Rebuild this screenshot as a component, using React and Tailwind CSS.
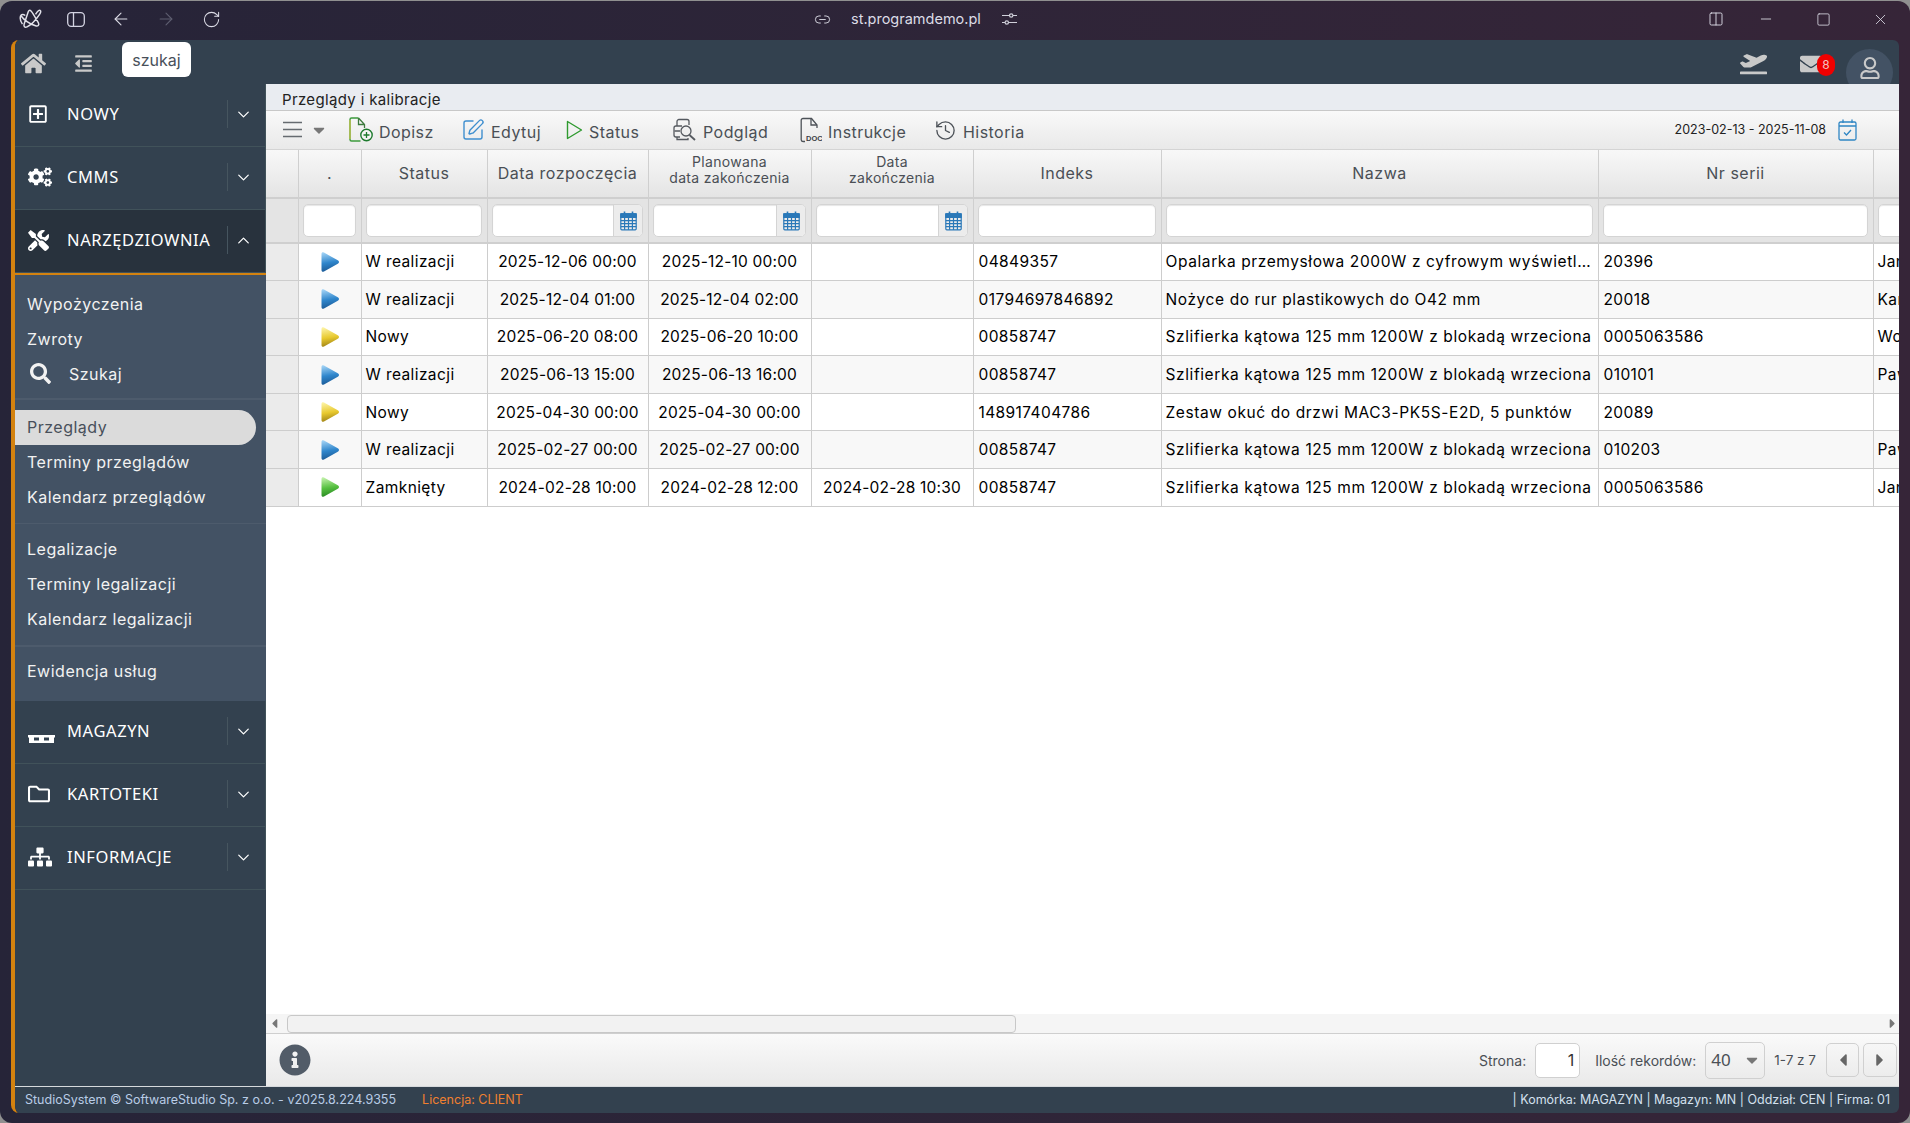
import React from 'react';
import { ArrowLeft, ArrowRight, RotateCw, Link2, Columns2, Minus, Square, X, ChevronDown, ChevronUp, SquarePen, History } from 'lucide-react';
import { FaHome, FaOutdent, FaRegPlusSquare, FaCogs, FaTools, FaRegFolder, FaSitemap, FaPlaneDeparture, FaEnvelope, FaInfoCircle, FaSearch, FaCaretDown, FaCaretLeft, FaCaretRight, FaRegUser } from 'react-icons/fa';

const columns = [32, 63, 126, 161, 163, 162, 188, 437, 275, 180];

const rows = [
    { color: 'blue', status: 'W realizacji', start: '2025-12-06 00:00', plan: '2025-12-10 00:00', end: '', index: '04849357', name: 'Opalarka przemysłowa 2000W z cyfrowym wyświetl…', serial: '20396', person: 'Jan' },
    { color: 'blue', status: 'W realizacji', start: '2025-12-04 01:00', plan: '2025-12-04 02:00', end: '', index: '01794697846892', name: 'Nożyce do rur plastikowych do O42 mm', serial: '20018', person: 'Kamil' },
    { color: 'yellow', status: 'Nowy', start: '2025-06-20 08:00', plan: '2025-06-20 10:00', end: '', index: '00858747', name: 'Szlifierka kątowa 125 mm 1200W z blokadą wrzeciona', serial: '0005063586', person: 'Wojciech' },
    { color: 'blue', status: 'W realizacji', start: '2025-06-13 15:00', plan: '2025-06-13 16:00', end: '', index: '00858747', name: 'Szlifierka kątowa 125 mm 1200W z blokadą wrzeciona', serial: '010101', person: 'Paweł' },
    { color: 'yellow', status: 'Nowy', start: '2025-04-30 00:00', plan: '2025-04-30 00:00', end: '', index: '148917404786', name: 'Zestaw okuć do drzwi MAC3-PK5S-E2D, 5 punktów', serial: '20089', person: '' },
    { color: 'blue', status: 'W realizacji', start: '2025-02-27 00:00', plan: '2025-02-27 00:00', end: '', index: '00858747', name: 'Szlifierka kątowa 125 mm 1200W z blokadą wrzeciona', serial: '010203', person: 'Paweł' },
    { color: 'green', status: 'Zamknięty', start: '2024-02-28 10:00', plan: '2024-02-28 12:00', end: '2024-02-28 10:30', index: '00858747', name: 'Szlifierka kątowa 125 mm 1200W z blokadą wrzeciona', serial: '0005063586', person: 'Jan' },
];

const triangleColors = {
    blue: ['#a4d4f6', '#2f86cc', '#1c5a96'],
    yellow: ['#fdf4a8', '#e8c92e', '#a08418'],
    green: ['#c4f2ac', '#56c040', '#2a8a24'],
};

const StatusTriangle = ({ color }) => {
    const [light, mid, dark] = triangleColors[color];
    const id = `tri-${color}`;
    return (
        <svg width="18" height="20" viewBox="0 0 18 20" className="mx-auto">
            <defs>
                <linearGradient id={id} x1="0.2" y1="0" x2="0.35" y2="1">
                    <stop offset="0" stopColor={light} />
                    <stop offset="0.55" stopColor={mid} />
                    <stop offset="1" stopColor={dark} />
                </linearGradient>
            </defs>
            <path d="M0.5 2C0.500 .4 1.600 -.2 3 .6L16.800 8.300c1.600 .9 1.600 2.500 0 3.400L3 19.400c-1.400 .8-2.500 .2-2.500-1.400z" fill={`url(#${id})`} />
        </svg>
    );
};

const CalendarIcon = () => (
    <svg width="17" height="20" viewBox="0 0 17 20" fill="none" stroke="#2a78b8" strokeWidth="1.2">
        <path d="M4.5 0.5v4M12.5 0.5v4" strokeWidth="1.6" />
        <rect x="0.8" y="2.8" width="15.4" height="16" rx="1" />
        <rect x="0.8" y="2.8" width="15.4" height="3.6" fill="#2a78b8" />
        <path d="M0.8 9.6h15.4M0.8 12.6h15.4M0.8 15.6h15.4M4.6 6.4v12.4M8.5 6.4v12.4M12.4 6.4v12.4" />
    </svg>
);

const LogoIcon = () => (
    <svg width="24" height="23" viewBox="0 0 21 20" fill="none" stroke="#e2e2ea" strokeWidth="1.3" strokeLinejoin="round">
        <path d="M1.5 6.5c3 4 8 7.500 13 9 2 .6 3.500-.5 2.500-2.500C14.500 8.500 12 4 10.500 2.500 9.500 1.500 8.500 2 8 3.500L4.500 14c-.6 2 .6 3.500 2.500 2.500 4-2 8-6.500 11-11 1-1.500 1.500-3 .5-3.500-1.500-.5-3 2-4 3.500" />
        <path d="M1.500 6.500C.8 8.500 1.500 12 3 14M1.500 6.500c1-1 2.500-1 4 0" />
    </svg>
);

const SlidersIcon = () => (
    <svg width="15" height="14" viewBox="0 0 15 14" fill="none" stroke="#d0d0da" strokeWidth="1.2">
        <path d="M0 3.500h7.500M11 3.500h4M0 10.500h3M6.500 10.500h8.500" />
        <circle cx="9.200" cy="3.500" r="1.700" />
        <circle cx="4.800" cy="10.500" r="1.700" />
    </svg>
);

const PalletIcon = () => (
    <svg width="27" height="28" viewBox="0 0 27 28" fill="#fff" className="translate-y-[8px]">
        <rect x="0" y="10" width="27" height="2.500" />
        <rect x="1" y="15.500" width="25" height="2.500" />
        <rect x="1" y="12" width="5" height="4" />
        <rect x="11" y="12" width="5" height="4" />
        <rect x="21" y="12" width="5" height="4" />
    </svg>
);

const DopiszIcon = () => (
    <svg width="24" height="26" viewBox="0 0 24 26" fill="none">
        <path d="M9.500 1H2.500A1.500 1.500 0 0 0 1 2.500v20A1.500 1.500 0 0 0 2.500 24h9" stroke="#3d9a3d" strokeWidth="1.400" />
        <path d="M1 3v19" stroke="#d8c23a" strokeWidth="1" />
        <path d="M9.500 1l6 6.500v3.500M9.500 1v6.500h6" stroke="#3d7a3d" strokeWidth="1.300" />
        <circle cx="17.500" cy="18" r="5.700" fill="#fff" fillOpacity="0.4" stroke="#1d7a2d" strokeWidth="1.400" />
        <path d="M17.500 15v6M14.500 18h6" stroke="#1d7a2d" strokeWidth="1.300" />
    </svg>
);

const StatusIcon = () => (
    <svg width="17" height="20" viewBox="0 0 17 20" fill="none" stroke="#2f9a2f" strokeWidth="1.400" strokeLinejoin="round">
        <path d="M1.500 1.500l14 8.500-14 8.500z" />
    </svg>
);

const PodgladIcon = () => (
    <svg width="24" height="24" viewBox="0 0 24 24" fill="none" stroke="#55595f" strokeWidth="1.300">
        <path d="M4 8V3.500A2 2 0 0 1 6 1.500h8a2 2 0 0 1 2 2V7" />
        <path d="M9 8H3a2 2 0 0 0-2 2v7a2 2 0 0 0 2 2h4" />
        <path d="M1.500 13H7M4 19v2.500h11V20" />
        <circle cx="13" cy="13" r="5" />
        <path d="M16.500 17l5.500 5" strokeWidth="1.800" />
    </svg>
);

const InstrukcjeIcon = () => (
    <svg width="22" height="26" viewBox="0 0 22 26" fill="none" stroke="#4d5258" strokeWidth="1.300">
        <path d="M6 1.500H3A1.800 1.800 0 0 0 1.200 3.300v19.400A1.800 1.800 0 0 0 3 24.500h2" />
        <path d="M6 1.500h5.500l5.500 6.500v3" />
        <path d="M11 1.500V8h6" />
        <text x="6" y="24" fontSize="7.500" fontWeight="800" fill="#3d4248" stroke="none" fontFamily="Liberation Sans, sans-serif">DOC</text>
    </svg>
);

const ToolbarButton = ({ icon, label, className }) => (
    <button className={`flex shrink-0 items-center gap-[6px] text-[#4a4f55] ${className}`}>
        {icon}
        <span className="relative top-[2px] text-[16px] tracking-[0.45px]">{label}</span>
    </button>
);

const MenuHeader = ({ icon, label, open }) => (
    <div className={`flex h-[63px] items-start border-b border-r border-[#41525a] pt-[16px] ${open ? 'bg-[#28323d]' : ''}`}>
        <div className="flex h-[28px] w-[52px] items-center pl-[13px] text-white">{icon}</div>
        <span className="w-[160px] whitespace-nowrap pt-[3px] font-['Noto_Sans',sans-serif] text-[16.5px] leading-[22px] tracking-[0.6px] text-white">{label}</span>
        <div className="flex h-[28px] flex-1 items-center justify-center border-l border-[#46555f] pr-[6px] text-white">
            {open ? <ChevronUp size={19} strokeWidth={1.6} /> : <ChevronDown size={19} strokeWidth={1.6} />}
        </div>
    </div>
);

const SubItem = ({ children, active }) => (
    <div
        className={`flex h-[35px] items-center pb-[2px] pl-[12px] text-[16px] tracking-[0.5px] ${
            active ? 'mr-[10px] rounded-r-[18px] bg-[#dbdbdb] text-[#48505a]' : 'text-[#f2f2f2]'
        }`}
    >
        {children}
    </div>
);

const Sidebar = () => (
    <aside className="flex w-[251px] shrink-0 flex-col bg-[#33414f]">
        <MenuHeader icon={<FaRegPlusSquare size={20} />} label="NOWY" />
        <MenuHeader icon={<FaCogs size={24} />} label="CMMS" />
        <MenuHeader icon={<FaTools size={21} />} label="NARZĘDZIOWNIA" open />
        <div className="h-[428px] border-t-2 border-[#d4820f] bg-[#435264]">
            <div className="border-b-2 border-[#4d5b6c] pb-[6px] pt-[12px]">
                <SubItem>Wypożyczenia</SubItem>
                <SubItem>Zwroty</SubItem>
                <SubItem>
                    <FaSearch size={21} className="ml-[3px] mr-[18px]" />
                    Szukaj
                </SubItem>
            </div>
            <div className="border-b border-[#4d5b6c] pb-[8px] pt-[10px]">
                <SubItem active>Przeglądy</SubItem>
                <SubItem>Terminy przeglądów</SubItem>
                <SubItem>Kalendarz przeglądów</SubItem>
            </div>
            <div className="border-b-2 border-[#4d5b6c] pb-[8px] pt-[8px]">
                <SubItem>Legalizacje</SubItem>
                <SubItem>Terminy legalizacji</SubItem>
                <SubItem>Kalendarz legalizacji</SubItem>
            </div>
            <div className="pt-[7px]">
                <SubItem>Ewidencja usług</SubItem>
            </div>
        </div>
        <MenuHeader icon={<PalletIcon />} label="MAGAZYN" />
        <MenuHeader icon={<FaRegFolder size={22} />} label="KARTOTEKI" />
        <MenuHeader icon={<FaSitemap size={24} />} label="INFORMACJE" />
    </aside>
);

const FilterInput = ({ calendar }) => (
    <div className="flex h-[33px] w-full overflow-hidden rounded-[5px] border border-[#d4d4d4] bg-white shadow-[inset_0_1px_1px_#e6e6e6]">
        <div className="flex-1" />
        {calendar && (
            <div className="flex w-[29px] items-center justify-center border-l border-[#d4d4d4] bg-[#ececec] pl-[2px]">
                <CalendarIcon />
            </div>
        )}
    </div>
);

const DataTable = () => {
    const tableWidth = columns.reduce((sum, w) => sum + w, 0);
    const headers = [
        '',
        '.',
        'Status',
        'Data rozpoczęcia',
        <span className="relative -top-[3px] block text-[14px] leading-[16px] tracking-[0.3px]">Planowana<br />data zakończenia</span>,
        <span className="relative -top-[3px] block text-[14px] leading-[16px] tracking-[0.3px]">Data<br />zakończenia</span>,
        'Indeks',
        'Nazwa',
        'Nr serii',
        '',
    ];
    const filters = [null, false, false, true, true, true, false, false, false, false];

    return (
        <div className="min-h-0 flex-1 overflow-hidden bg-white">
            <table className="table-fixed border-collapse" style={{ width: tableWidth }}>
                <colgroup>
                    {columns.map((w, i) => (
                        <col key={i} style={{ width: w }} />
                    ))}
                </colgroup>
                <thead>
                    <tr className="h-[48px] bg-gradient-to-b from-[#f8f8f8] to-[#e4e4e4]">
                        {headers.map((h, i) => (
                            <th key={i} className="border-x border-b-2 border-x-[#cfcfcf] border-b-[#cfcfcf] pb-[2px] text-center text-[16px] font-normal tracking-[0.5px] text-[#4a4f55] first:border-l-0">
                                {h}
                            </th>
                        ))}
                    </tr>
                    <tr className="h-[45px] bg-[#e4e4e4]">
                        {filters.map((f, i) => (
                            <th key={i} className="border-x border-b-2 border-x-[#cfcfcf] border-b-[#cfcfcf] pl-[4px] pr-[5px] first:border-l-0">
                                {f !== null && <FilterInput calendar={f} />}
                            </th>
                        ))}
                    </tr>
                </thead>
                <tbody>
                    {rows.map((row, i) => (
                        <tr key={i} className={`h-[37.6px] text-[15.5px] tracking-[0.4px] text-black ${i % 2 ? 'bg-[#f8f8f8]' : 'bg-white'}`}>
                            <td className="border border-l-0 border-[#cdcdcd] bg-[#ebebeb]" />
                            <td className="border border-[#cdcdcd]">
                                <StatusTriangle color={row.color} />
                            </td>
                            <td className="border border-[#cdcdcd] pl-[4px]">{row.status}</td>
                            <td className="border border-[#cdcdcd] text-center tracking-[0.2px]">{row.start}</td>
                            <td className="border border-[#cdcdcd] text-center tracking-[0.2px]">{row.plan}</td>
                            <td className="border border-[#cdcdcd] text-center tracking-[0.2px]">{row.end}</td>
                            <td className="border border-[#cdcdcd] px-[5px]">{row.index}</td>
                            <td className="whitespace-nowrap border border-[#cdcdcd] px-[4px] tracking-[0.6px]">{row.name}</td>
                            <td className="border border-[#cdcdcd] px-[5px]">{row.serial}</td>
                            <td className="border border-[#cdcdcd] px-[4px]">{row.person}</td>
                        </tr>
                    ))}
                </tbody>
            </table>
        </div>
    );
};

const Pager = () => (
    <div className="flex h-[53px] shrink-0 items-center border-t border-[#cfcfcf] bg-gradient-to-b from-[#fafafa] to-[#e9e9e9] pl-[13px] pr-[2px] text-[14px] text-[#4a4f55]">
        <FaInfoCircle size={32} className="text-[#525c68]" />
        <span className="ml-auto">Strona:</span>
        <div className="ml-[9px] flex h-[35px] w-[45px] items-center justify-end rounded-[5px] border border-[#d0d0d0] bg-white pr-[5px] text-[16px] text-[#333]">1</div>
        <span className="ml-[15px]">Ilość rekordów:</span>
        <div className="ml-[9px] flex h-[37px] w-[60px] items-center justify-between rounded-[5px] border border-[#d0d0d0] pl-[5px] pr-[3px] font-['Noto_Sans',sans-serif] text-[17px]">
            40
            <FaCaretDown size={18} className="text-[#777]" />
        </div>
        <span className="ml-[9px] mr-[10px] text-[13.5px]">1-7 z 7</span>
        <div className="mr-[4px] flex h-[34px] w-[33px] items-center justify-center rounded-[5px] border border-[#d0d0d0] text-[#666]">
            <FaCaretLeft size={20} />
        </div>
        <div className="flex h-[34px] w-[34px] items-center justify-center rounded-[5px] border border-[#d0d0d0] text-[#666]">
            <FaCaretRight size={20} />
        </div>
    </div>
);

const Content = () => (
    <main className="flex min-w-0 flex-1 flex-col bg-white">
        <div className="flex h-[27px] shrink-0 items-center border-b border-[#c8c8c8] bg-[#e9ecf1] pl-[16px] pt-[6px] text-[15px] tracking-[0.35px] text-[#222]">
            Przeglądy i kalibracje
        </div>
        <div className="flex h-[39px] shrink-0 items-center border-b border-[#d4d4d4] bg-gradient-to-b from-[#f9f9f9] to-[#e9e9e9] pl-[17px] pr-[42px]">
            <svg width="19" height="17" viewBox="0 0 19 17" stroke="#666b70" strokeWidth="1.700" className="relative top-[-1px] shrink-0">
                <path d="M0 1.500h19M0 8.500h19M0 15.500h19" />
            </svg>
            <FaCaretDown size={18} className="ml-[8px] mr-[21px] shrink-0 text-[#777]" />
            <ToolbarButton icon={<DopiszIcon />} label="Dopisz" className="w-[112px]" />
            <ToolbarButton icon={<SquarePen size={24} strokeWidth={1.4} className="text-[#3f8fcf]" />} label="Edytuj" className="w-[105px] gap-[3px]" />
            <ToolbarButton icon={<StatusIcon />} label="Status" className="w-[107px]" />
            <ToolbarButton icon={<PodgladIcon />} label="Podgląd" className="w-[127px]" />
            <ToolbarButton icon={<InstrukcjeIcon />} label="Instrukcje" className="w-[134px]" />
            <ToolbarButton icon={<History size={23} strokeWidth={1.4} className="text-[#4d5258]" />} label="Historia" className="gap-[4px]" />
            <span className="ml-auto text-[12.5px] text-[#222]">2023-02-13 - 2025-11-08</span>
            <svg width="19" height="22" viewBox="0 0 19 22" fill="none" stroke="#2f86c4" strokeWidth="1.300" className="ml-[12px]">
                <rect x="1" y="3" width="17" height="18" rx="1.500" />
                <path d="M1 7h17M5 0.500V4M14 0.500V4M6 13.500l2.500 2.500 4.500-5" />
            </svg>
        </div>
        <DataTable />
        <div className="flex h-[19px] shrink-0 items-center bg-[#f5f5f5]">
            <FaCaretLeft size={15} className="ml-[1px] text-[#777]" />
            <div className="ml-[5px] h-[18px] w-[729px] rounded-[4px] border border-[#c8c8c8] bg-[#f2f2f2]" />
            <FaCaretRight size={15} className="ml-auto mr-[-1px] text-[#777]" />
        </div>
        <Pager />
    </main>
);

const TitleBar = () => (
    <div className="relative flex h-[39px] shrink-0 items-center pb-[3px] text-[#dcdce6]">
        <div className="ml-[19px]"><LogoIcon /></div>
        <svg width="18" height="15" viewBox="0 0 18 15" fill="none" stroke="#d4d4e2" strokeWidth="1.300" className="ml-[24px]">
            <rect x="0.700" y="0.700" width="16.600" height="13.600" rx="3.500" />
            <path d="M6.500 0.700v13.600" />
        </svg>
        <ArrowLeft size={20} strokeWidth={1.3} className="ml-[26px]" />
        <ArrowRight size={20} strokeWidth={1.3} className="ml-[25px] text-[#5e5e70]" />
        <RotateCw size={19} strokeWidth={1.3} className="ml-[26px]" />
        <div className="ml-[593px] flex items-center">
            <Link2 size={17} strokeWidth={1.3} />
            <span className="ml-[20px] text-[14.5px]">st.programdemo.pl</span>
            <span className="ml-[21px]"><SlidersIcon /></span>
        </div>
        <div className="ml-auto mr-[21px] flex items-center">
            <Columns2 size={16} strokeWidth={1.4} />
            <Minus size={16} strokeWidth={1.3} className="ml-[34px]" />
            <Square size={15} strokeWidth={1.3} className="ml-[42px]" />
            <X size={17} strokeWidth={1.2} className="ml-[41px]" />
        </div>
    </div>
);

const Header = () => (
    <div className="flex h-[44px] shrink-0 items-center overflow-hidden bg-[#33414f] pt-[3px] text-[#c9c9c9]">
        <FaHome size={25} className="ml-[6px]" />
        <FaOutdent size={19} className="ml-[28px]" />
        <button className="ml-[29px] mb-[8px] h-[35px] w-[69px] rounded-[6px] bg-white text-[16px] text-[#48505a]">szukaj</button>
        <FaPlaneDeparture size={27} className="ml-auto" />
        <div className="relative ml-[33px] h-[22px] w-[35px]">
            <FaEnvelope size={22} />
            <span className="absolute left-[17px] top-[1px] flex h-[22px] w-[18px] items-center justify-center rounded-full bg-[#f00000] text-[12px] text-[#f2c0c0]">8</span>
        </div>
        <div className="ml-[11px] mr-[6px] flex h-[47px] w-[47px] translate-y-[9px] items-center justify-center rounded-full bg-[#435264] pb-[9px]">
            <FaRegUser size={22} />
        </div>
    </div>
);

const Footer = () => (
    <div className="flex h-[27px] shrink-0 items-center border-t border-white/80 bg-[#33414f] pl-[10px] pr-[9px] text-[12.5px] text-[#b9cce6]">
        <span>StudioSystem © SoftwareStudio Sp. z o.o. - v2025.8.224.9355</span>
        <span className="ml-[26px] text-[#f08030]">Licencja: CLIENT</span>
        <span className="ml-auto text-[#d4e0ee]">| Komórka: MAGAZYN | Magazyn: MN | Oddział: CEN | Firma: 01</span>
    </div>
);

const App = () => (
    <div className="h-[1123px] w-[1910px] overflow-hidden bg-[#909090] pt-px font-['Inter',sans-serif]">
        <div className="flex h-full flex-col rounded-[12px] bg-gradient-to-r from-[#262438] to-[#362538]">
            <TitleBar />
            <div className="mx-[11px] mb-[10px] flex min-h-0 flex-1 flex-col overflow-hidden rounded-l-[8px] rounded-tr-[6px] rounded-br-[6px] border-l-4 border-[#d4820f]">
                <Header />
                <div className="flex min-h-0 flex-1 bg-[#33414f]">
                    <Sidebar />
                    <Content />
                </div>
                <Footer />
            </div>
        </div>
    </div>
);

export default App;
